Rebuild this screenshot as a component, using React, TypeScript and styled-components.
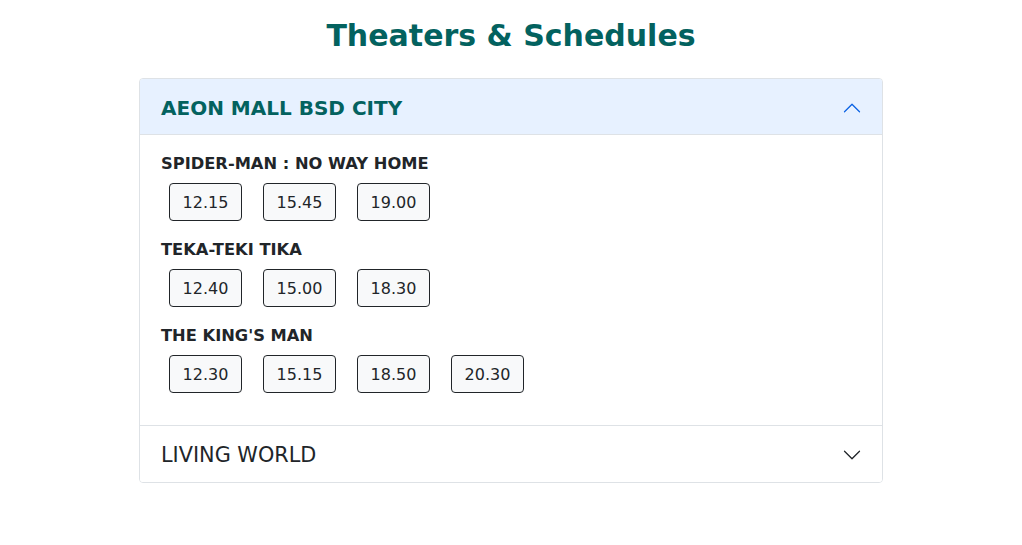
import React, { useState } from "react";
import styled, { createGlobalStyle } from "styled-components";

const Global = createGlobalStyle`
  * { box-sizing: border-box; }
  body {
    margin: 0;
    background: #ffffff;
    font-family: "DejaVu Sans", Verdana, sans-serif;
    color: #212529;
  }
`;

const Page = styled.div`
  width: 744px;
  margin: 0 auto;
  padding-top: 16px;
`;

const Title = styled.h2`
  margin: 0 0 22px;
  text-align: center;
  font-size: 30px;
  line-height: 40px;
  font-weight: 700;
  color: #03625f;
`;

const Accordion = styled.div`
  border: 1px solid #dee2e6;
  border-radius: 4px;
  overflow: hidden;
`;

const Item = styled.div<{ $last?: boolean }>`
  border-bottom: ${(p) => (p.$last ? "none" : "1px solid #dee2e6")};
`;

const Header = styled.button<{ $open: boolean }>`
  display: flex;
  align-items: center;
  justify-content: space-between;
  width: 100%;
  height: 56px;
  padding: 2px 20px 0 21px;
  border: none;
  border-bottom: ${(p) => (p.$open ? "1px solid #dee2e6" : "none")};
  background: ${(p) => (p.$open ? "#e7f1ff" : "#ffffff")};
  color: ${(p) => (p.$open ? "#03625f" : "#212529")};
  font-family: inherit;
  font-size: ${(p) => (p.$open ? "20px" : "20.8px")};
  font-weight: ${(p) => (p.$open ? 700 : 400)};
  text-align: left;
  cursor: pointer;
`;

const Chevron = styled.svg<{ $open: boolean }>`
  width: 20px;
  height: 20px;
  flex-shrink: 0;
  transform: ${(p) => (p.$open ? "rotate(180deg)" : "none")};
  color: ${(p) => (p.$open ? "#0c63e4" : "#212529")};
`;

const Body = styled.div`
  padding: 17px 20px 32px 21px;
`;

const Movie = styled.div`
  display: flex;
  flex-direction: column;
  gap: 7px;
  margin-bottom: 17px;
  &:last-child { margin-bottom: 0; }
`;

const MovieTitle = styled.h6`
  margin: 0;
  font-size: 16.3px;
  line-height: 24px;
  font-weight: 700;
  color: #212529;
`;

const Times = styled.div`
  display: flex;
  gap: 21px;
  padding-left: 8px;
`;

const TimeButton = styled.button`
  width: 73px;
  height: 38px;
  border: 1px solid #212529;
  border-radius: 4px;
  background: #f8f9fa;
  color: #212529;
  font-family: inherit;
  font-size: 16px;
  cursor: pointer;
`;

const data = [
  {
    name: "AEON MALL BSD CITY",
    movies: [
      { title: "SPIDER-MAN : NO WAY HOME", times: ["12.15", "15.45", "19.00"] },
      { title: "TEKA-TEKI TIKA", times: ["12.40", "15.00", "18.30"] },
      { title: "THE KING'S MAN", times: ["12.30", "15.15", "18.50", "20.30"] },
    ],
  },
  { name: "LIVING WORLD", movies: [] },
];

const ChevronIcon = ({ open }: { open: boolean }) => (
  <Chevron $open={open} viewBox="0 0 16 16" fill="currentColor">
    <path
      fillRule="evenodd"
      d="M1.646 4.646a.5.5 0 0 1 .708 0L8 10.293l5.646-5.647a.5.5 0 0 1 .708.708l-6 6a.5.5 0 0 1-.708 0l-6-6a.5.5 0 0 1 0-.708z"
    />
  </Chevron>
);

export default function App() {
  const [open, setOpen] = useState(0);
  return (
    <>
      <Global />
      <Page>
        <Title>Theaters &amp; Schedules</Title>
        <Accordion>
          {data.map((t, i) => (
            <Item key={t.name} $last={i === data.length - 1}>
              <Header $open={open === i} onClick={() => setOpen(open === i ? -1 : i)}>
                <span>{t.name}</span>
                <ChevronIcon open={open === i} />
              </Header>
              {open === i && (
                <Body>
                  {t.movies.map((m) => (
                    <Movie key={m.title}>
                      <MovieTitle>{m.title}</MovieTitle>
                      <Times>
                        {m.times.map((tm) => (
                          <TimeButton key={tm}>{tm}</TimeButton>
                        ))}
                      </Times>
                    </Movie>
                  ))}
                </Body>
              )}
            </Item>
          ))}
        </Accordion>
      </Page>
    </>
  );
}
